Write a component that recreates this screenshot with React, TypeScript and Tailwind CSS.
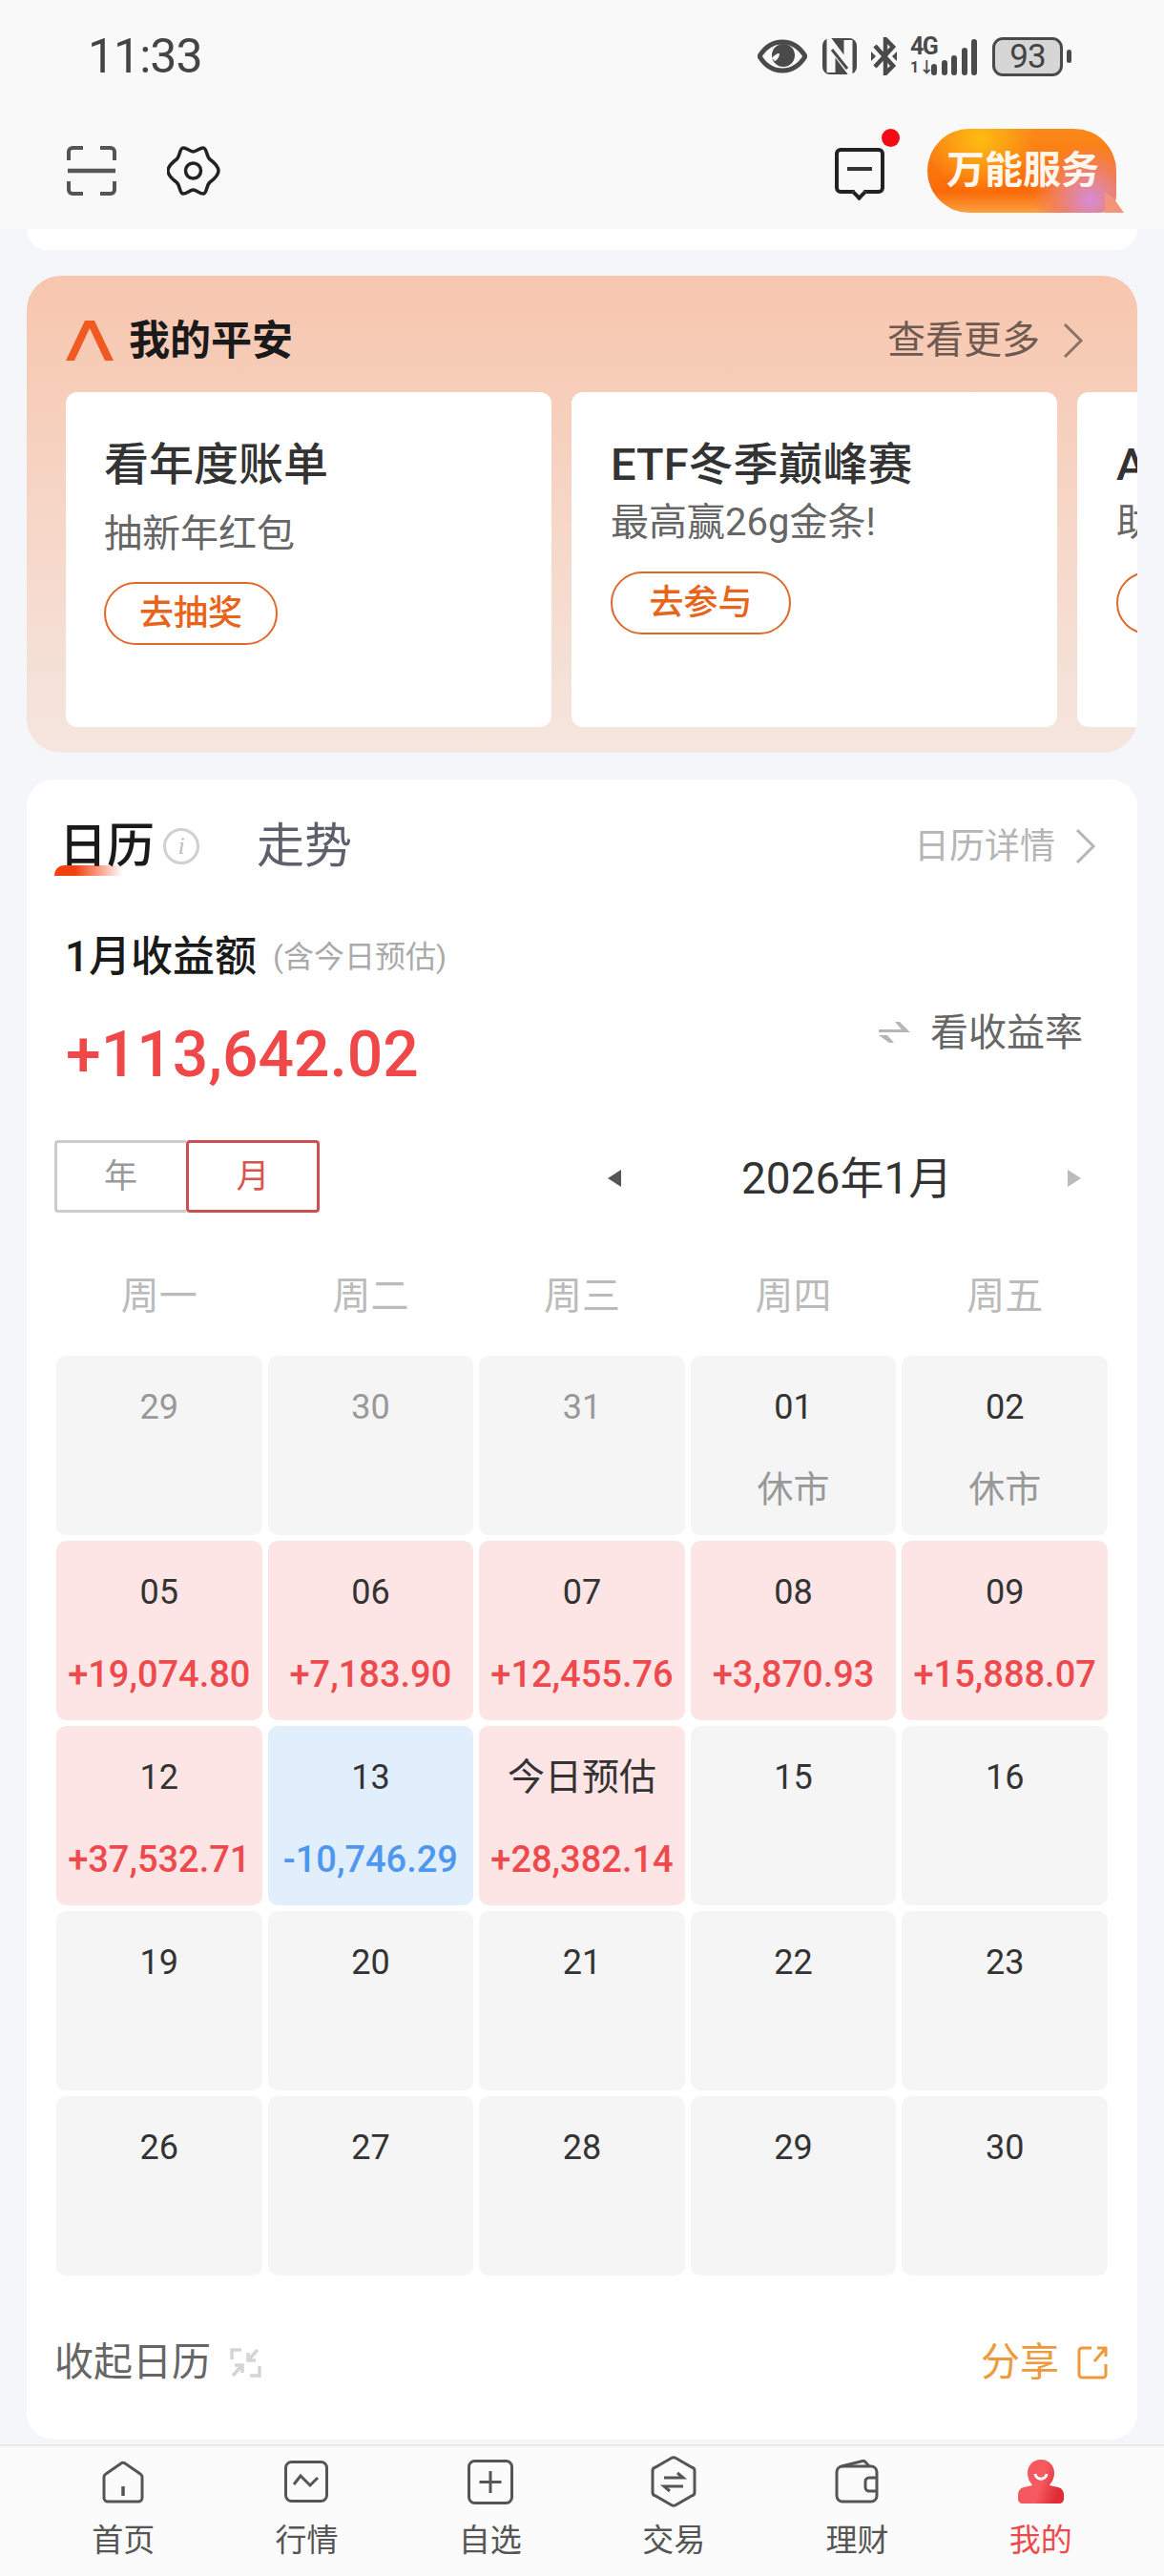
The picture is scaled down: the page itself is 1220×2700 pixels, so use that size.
import type { ReactNode } from 'react'

type Day = { date: string; value?: string; tone?: 'red' | 'blue'; past?: boolean }

const days: Day[] = [
  { date: '29', past: true },
  { date: '30', past: true },
  { date: '31', past: true },
  { date: '01', value: '休市' },
  { date: '02', value: '休市' },
  { date: '05', value: '+19,074.80', tone: 'red' },
  { date: '06', value: '+7,183.90', tone: 'red' },
  { date: '07', value: '+12,455.76', tone: 'red' },
  { date: '08', value: '+3,870.93', tone: 'red' },
  { date: '09', value: '+15,888.07', tone: 'red' },
  { date: '12', value: '+37,532.71', tone: 'red' },
  { date: '13', value: '-10,746.29', tone: 'blue' },
  { date: '今日预估', value: '+28,382.14', tone: 'red' },
  { date: '15' },
  { date: '16' },
  { date: '19' },
  { date: '20' },
  { date: '21' },
  { date: '22' },
  { date: '23' },
  { date: '26' },
  { date: '27' },
  { date: '28' },
  { date: '29' },
  { date: '30' },
]

const weekdays = ['周一', '周二', '周三', '周四', '周五']

function Chevron({ className }: { className: string }) {
  return (
    <svg viewBox="0 0 24 38" className={className} fill="none" stroke="currentColor" strokeWidth="3">
      <path d="M3 2l17 17L3 36" />
    </svg>
  )
}

function StatusIcons() {
  return (
    <div className="flex items-center text-[#4a4a4a]">
      <svg width="52" height="36" viewBox="0 0 52 36" fill="none">
        <path d="M2 18C8 8 16 3 26 3s18 5 24 15c-6 10-14 15-24 15S8 28 2 18z" stroke="#4a4a4a" strokeWidth="5" />
        <circle cx="27" cy="17" r="12" fill="#4a4a4a" />
        <path d="M15 20c2-3 5-5 8-5 0 3-2 7-5 8z" fill="#f9f9f9" />
      </svg>
      <svg className="ml-[16px]" width="36" height="38" viewBox="0 0 36 38" fill="none">
        <rect width="36" height="38" rx="8" fill="#4a4a4a" />
        <path d="M9 36V7l18 24V2" stroke="#f9f9f9" strokeWidth="9" />
        <path d="M10 12l16 20" stroke="#4a4a4a" strokeWidth="3" />
      </svg>
      <svg className="ml-[15px]" width="27" height="40" viewBox="0 0 27 40" fill="none" stroke="#4a4a4a" strokeWidth="4.5">
        <path d="M4 9l19 21-8 8V2l8 8L4 31" />
        <path d="M0 15l5 5-5 5zM27 15l-5 5 5 5z" fill="#4a4a4a" stroke="none" />
      </svg>
      <div className="relative ml-[14px] h-[40px] w-[82px]">
        <span className="absolute left-0 top-[-2px] text-[25px] font-bold leading-[24px] tracking-[-1.5px]">4G</span>
        <span className="absolute left-0 top-[24px] text-[16px] font-bold leading-[16px]">1↓</span>
        <div className="absolute bottom-0 left-[22px] flex h-[38px] items-end gap-[4.5px]">
          <span className="h-[12px] w-[6px] rounded-full bg-[#4a4a4a]" />
          <span className="h-[16px] w-[6px] rounded-full bg-[#4a4a4a]" />
          <span className="h-[21px] w-[6px] rounded-full bg-[#4a4a4a]" />
          <span className="h-[29px] w-[6px] rounded-full bg-[#4a4a4a]" />
          <span className="h-[38px] w-[6px] rounded-full bg-[#4a4a4a]" />
        </div>
      </div>
      <div className="ml-[4px] flex h-[41px] w-[74px] items-center justify-center rounded-[11px] border-[3px] border-[#4a4a4a] bg-[#d6d6d6] text-[35px] leading-none tracking-[-1px] text-[#444]">
        93
      </div>
      <span className="ml-[4px] h-[14px] w-[5px] rounded-full bg-[#4a4a4a]" />
    </div>
  )
}

const tabs: { label: string; icon: ReactNode; active?: boolean }[] = [
  {
    label: '首页',
    icon: (
      <svg width="44" height="45" viewBox="0 0 44 45" fill="none" stroke="#555" strokeWidth="3">
        <path d="M19.5 3.2a4 4 0 015 0L40 14a4 4 0 012 3v22a4 4 0 01-4 4H6a4 4 0 01-4-4V17a4 4 0 012-3z" />
        <path d="M22 27v10" strokeWidth="3.5" />
      </svg>
    ),
  },
  {
    label: '行情',
    icon: (
      <svg width="46" height="44" viewBox="0 0 46 44" fill="none" stroke="#555" strokeWidth="3">
        <rect x="1.5" y="1.5" width="43" height="41" rx="6" />
        <path d="M10 25l7-9 10 10 8-8" />
      </svg>
    ),
  },
  {
    label: '自选',
    icon: (
      <svg width="48" height="47" viewBox="0 0 48 47" fill="none" stroke="#555" strokeWidth="3">
        <rect x="1.5" y="1.5" width="45" height="44" rx="6" />
        <path d="M24 12v23M12.5 23.5h23" />
      </svg>
    ),
  },
  {
    label: '交易',
    icon: (
      <svg width="48" height="54" viewBox="0 0 48 54" fill="none" stroke="#555" strokeWidth="3">
        <path d="M21.5 2.5a5 5 0 015 0L43 12a4 4 0 013 4v22a4 4 0 01-3 4l-16.500 9.500a5 5 0 01-5 0L5 42a4 4 0 01-3-4V16a4 4 0 013-4z" />
        <path d="M14 23h20l-6-5M34 32H14l6 5" />
      </svg>
    ),
  },
  {
    label: '理财',
    icon: (
      <svg width="46" height="46" viewBox="0 0 46 46" fill="none" stroke="#555" strokeWidth="3">
        <rect x="2" y="7" width="42" height="37" rx="6" />
        <path d="M7 7l22-5.500a3 3 0 013 1L36 7" />
        <path d="M44 19h-8a4 4 0 00-4 4v6a4 4 0 004 4h8" />
      </svg>
    ),
  },
  {
    label: '我的',
    active: true,
    icon: (
      <svg width="48" height="46" viewBox="0 0 48 46" fill="none">
        <defs>
          <linearGradient id="me" x1="0" y1="0" x2="1" y2="0.3">
            <stop offset="0" stopColor="#f4585e" />
            <stop offset="0.6" stopColor="#f65a60" />
            <stop offset="1" stopColor="#e02c34" />
          </linearGradient>
        </defs>
        <path d="M24 0c8 0 14 6 14 14 0 6-3 10-5 13l9 2c4 1 6 4 6 8v4c0 3-2 5-5 5H5c-3 0-5-2-5-5v-4c0-4 2-7 6-8l9-2c-2-3-5-7-5-13C10 6 16 0 24 0z" fill="url(#me)" />
        <path d="M18 15c1 7 11 7 12 0" stroke="#fff" strokeWidth="3" />
      </svg>
    ),
  },
]

export default function App() {
  return (
    <main className="h-[2700px] w-[1220px] overflow-hidden bg-[#f4f6fa] font-['Roboto','Noto_Sans_CJK_SC',sans-serif]">
      <header className="h-[240px] bg-[#f9f9f9]">
        <div className="flex h-[118px] items-center justify-between pl-[92px] pr-[97px]">
          <span className="text-[50px] leading-none tracking-[-1px] text-[#444]">11:33</span>
          <StatusIcons />
        </div>
        <div className="flex h-[122px] items-center pl-[70px] pr-[50px]">
          <svg width="52" height="52" viewBox="0 0 52 52" fill="none" stroke="#555" strokeWidth="4">
            <path d="M2 15V6a4 4 0 014-4h11M35 2h11a4 4 0 014 4v9M2 37v9a4 4 0 004 4h11M35 50h11a4 4 0 004-4v-9" />
            <path d="M1 26h50" strokeWidth="4.500" />
          </svg>
          <svg className="ml-[53px]" width="56" height="52" viewBox="0 0 56 52" fill="none" stroke="#222" strokeWidth="3.5">
            <path d="M27.500 6C31 6 34 2 38 2c4 0 3 9 7 12 4 3 9 7 9 12s-5 9-9 12c-4 3-3 12-7 12s-7-4-10.500-4S21 50 17 50s-3-9-7-12c-4-3-9-7-9-12s5-9 9-12c4-3 3-12 7-12s7 4 10.500 4z" />
            <circle cx="27.500" cy="26" r="8" />
          </svg>
          <div className="relative ml-auto h-[48px] w-[52px] rounded-[6px] border-[4px] border-[#222]">
            <span className="absolute left-[9px] top-[16px] h-[4px] w-[26px] bg-[#333]" />
            <span className="absolute bottom-[-9px] left-[16px] h-[11px] w-[11px] rotate-45 border-b-[4px] border-r-[4px] border-[#222] bg-[#f9f9f9]" />
            <span className="absolute right-[-20px] top-[-24px] h-[19px] w-[19px] rounded-full bg-[#f30a14]" />
          </div>
          <div className="relative ml-[45px] flex h-[88px] w-[198px] items-center rounded-[44px] rounded-br-[18px] bg-[radial-gradient(circle_at_86%_85%,#d58bd8_0,#f08060_18%,transparent_32%),radial-gradient(circle_at_28%_12%,#fdbb12_0,transparent_35%),linear-gradient(180deg,#fb8a1a,#fb6a08_75%,#fca040)] pl-[20px] text-[40px] font-bold leading-none text-[#fff6ee]">
            <span className="whitespace-nowrap">万能服务</span>
            <span className="absolute bottom-0 right-[-8px] h-[22px] w-[20px] bg-[#f4957a] [clip-path:polygon(100%_100%,0_100%,0_0,45%_30%)]" />
          </div>
        </div>
      </header>

      <div className="mx-[28px] h-[22px] rounded-b-[24px] bg-white" />

      <section className="mx-[28px] mt-[27px] h-[500px] overflow-hidden rounded-[36px] bg-[linear-gradient(180deg,#f7c6ae,#f5e6df)] pl-[41px]">
        <div className="flex h-[122px] items-center pr-[55px] pt-[14px]">
          <svg width="50" height="42" viewBox="0 0 50 42" fill="#f05a22">
            <path d="M20 0h10l20 42H41L25 8 9 42H0z" />
          </svg>
          <h2 className="ml-[16px] text-[43px] font-bold leading-none text-[#1a1a1a]">我的平安</h2>
          <span className="ml-auto text-[40px] leading-none text-[#6e5a50]">查看更多</span>
          <Chevron className="ml-[23px] h-[38px] w-[24px] text-[#8a7468]" />
        </div>
        <div className="flex gap-[21px]">
          <div className="h-[351px] w-[509px] shrink-0 rounded-[12px] bg-white pl-[40px] pt-[50px]">
            <h3 className="text-[47px] font-medium leading-[52px] text-[#333]">看年度账单</h3>
            <p className="mt-[22px] text-[40px] leading-[50px] text-[#666]">抽新年红包</p>
            <button className="mt-[25px] flex h-[66px] w-[182px] items-center justify-center rounded-[33px] border-2 border-[#e0682a] text-[36px] font-medium leading-none text-[#e8641b]">
              去抽奖
            </button>
          </div>
          <div className="h-[351px] w-[509px] shrink-0 rounded-[12px] bg-white pl-[41px] pt-[50px]">
            <h3 className="text-[47px] font-medium leading-[52px] text-[#333]">ETF冬季巅峰赛</h3>
            <p className="mt-[10px] text-[40px] leading-[50px] text-[#666]">最高赢26g金条!</p>
            <button className="mt-[26px] flex h-[66px] w-[189px] items-center justify-center rounded-[33px] border-2 border-[#e0682a] text-[36px] font-medium leading-none text-[#e8641b]">
              去参与
            </button>
          </div>
          <div className="h-[351px] w-[509px] shrink-0 rounded-[12px] bg-white pl-[41px] pt-[50px]">
            <h3 className="text-[47px] font-medium leading-[52px] text-[#333]">AI选基</h3>
            <p className="mt-[10px] text-[40px] leading-[50px] text-[#666]">助您决策</p>
            <button className="mt-[26px] flex h-[66px] w-[189px] items-center justify-center rounded-[33px] border-2 border-[#e0682a] text-[36px] font-medium leading-none text-[#e8641b]">
              去体验
            </button>
          </div>
        </div>
      </section>

      <section className="mx-[28px] mt-[28px] h-[1740px] rounded-[28px] bg-white pl-[31px] pr-[31px] pt-[40px]">
        <div className="flex h-[60px] items-center">
          <div className="relative ml-[3px]">
            <span className="text-[50px] font-medium leading-none text-[#1a1a1a]">日历</span>
            <span className="absolute bottom-[-6px] left-[-5px] h-[11px] w-[72px] rounded-tl-[10px] bg-[linear-gradient(90deg,#f2400f,#f2400f_30%,transparent)]" />
          </div>
          <span className="ml-[9px] flex h-[38px] w-[38px] items-center justify-center rounded-full border-[3px] border-[#cfcfd4] font-['Liberation_Serif',serif] text-[26px] italic leading-none text-[#bcbcc2]">
            i
          </span>
          <span className="ml-[60px] text-[50px] leading-none text-[#5c606c]">走势</span>
          <span className="ml-auto text-[37px] leading-none text-[#b5b5b5]">日历详情</span>
          <Chevron className="ml-[20px] mr-[11px] h-[38px] w-[24px] text-[#b5b5b5]" />
        </div>

        <div className="ml-[9px] mt-[61px] flex h-[50px] items-center">
          <span className="text-[44px] font-medium leading-none text-[#1a1a1a]">1月收益额</span>
          <span className="ml-[17px] text-[32px] leading-none text-[#aaa]">(含今日预估)</span>
        </div>

        <div className="ml-[10px] mt-[38px] flex h-[80px] items-center justify-between">
          <span className="text-[66px] font-medium leading-none text-[#f04848]">+113,642.02</span>
          <div className="mb-[46px] mr-[26px] flex items-center">
            <svg width="33" height="26" viewBox="0 0 33 26" fill="#b5b5b5">
              <path d="M0 9h24l-7-8h5l11 11H0zM33 15H9l7 8h-5L0 15z" />
            </svg>
            <span className="ml-[21px] text-[40px] leading-none text-[#666]">看收益率</span>
          </div>
        </div>

        <div className="-ml-[2px] mt-[49px] flex h-[76px] items-center">
          <div className="flex h-[76px] w-[278px]">
            <span className="flex w-[138px] items-center justify-center rounded-l-[4px] border-y-[3px] border-l-[3px] border-[#ccc] pr-[2px] text-[35px] leading-none text-[#999]">
              年
            </span>
            <span className="flex w-[140px] items-center justify-center rounded-[4px] border-[3px] border-[#cc5053] text-[35px] leading-none text-[#d9534f]">
              月
            </span>
          </div>
          <span className="ml-[302px] mt-[4px] h-0 w-0 border-y-[9px] border-r-[14px] border-y-transparent border-r-[#555]" />
          <span className="ml-[126px] mt-[4px] w-[216px] whitespace-nowrap text-[46px] leading-none text-[#333]">2026年1月</span>
          <span className="ml-[126px] mt-[4px] h-0 w-0 border-y-[9px] border-l-[14px] border-y-transparent border-l-[#bbb]" />
        </div>

        <div className="mt-[63px] grid h-[50px] grid-cols-5 items-center gap-[6px] text-center text-[40px] leading-none text-[#bbb]">
          {weekdays.map((w) => (
            <span key={w}>{w}</span>
          ))}
        </div>

        <div className="mt-[37px] grid grid-cols-5 gap-[6px]">
          {days.map((d, i) => (
            <div
              key={i}
              className={
                'flex h-[188px] flex-col items-center rounded-[10px] pt-[29px] ' +
                (d.tone === 'red' ? 'bg-[#fde5e5]' : d.tone === 'blue' ? 'bg-[#e1effd]' : 'bg-[#f5f5f5]')
              }
            >
              <span
                className={
                  'leading-[50px] ' +
                  (d.date.length > 2 ? 'text-[39px] ' : 'text-[36px] ') +
                  (d.past ? 'text-[#999]' : 'text-[#333]')
                }
              >
                {d.date}
              </span>
              {d.value && (
                <span
                  className={
                    'mt-[36px] whitespace-nowrap leading-[50px] ' +
                    (d.tone === 'red'
                      ? 'text-[38px] font-medium text-[#ee4a4e]'
                      : d.tone === 'blue'
                        ? 'text-[38px] font-medium text-[#4f97ee]'
                        : 'text-[38px] text-[#999]')
                  }
                >
                  {d.value}
                </span>
              )}
            </div>
          ))}
        </div>

        <div className="mt-[66px] flex h-[50px] items-center">
          <span className="-ml-[2px] text-[41px] leading-none text-[#666]">收起日历</span>
          <svg className="ml-[20px]" width="33" height="31" viewBox="0 0 33 31" fill="none" stroke="#d5d5d5" strokeWidth="3.5">
            <path d="M2 12V2h10M31 19v10H21M29 2L19 13M19 5v8h8M3 29l10-11M13 26v-8H5" />
          </svg>
          <span className="ml-auto text-[41px] leading-none text-[#ee9a3c]">分享</span>
          <svg className="ml-[19px]" width="32" height="36" viewBox="0 0 32 36" fill="none" stroke="#ee9a3c" strokeWidth="3">
            <path d="M15 3H5a3 3 0 00-3 3v25a3 3 0 003 3h22a3 3 0 003-3V20M21 3h9v9M30 3L18 17" />
          </svg>
        </div>
      </section>

      <nav className="mt-[5px] grid h-[138px] grid-cols-6 border-t-2 border-[#e8e8e8] bg-[#fbfbfb] px-[33px] pt-[10px]">
        {tabs.map((t) => (
          <div key={t.label} className="flex flex-col items-center">
            <div className="flex h-[54px] items-center justify-center">{t.icon}</div>
            <span className={'mt-[18px] text-[33px] leading-none ' + (t.active ? 'text-[#ee4a4e]' : 'text-[#555]')}>
              {t.label}
            </span>
          </div>
        ))}
      </nav>
    </main>
  )
}
